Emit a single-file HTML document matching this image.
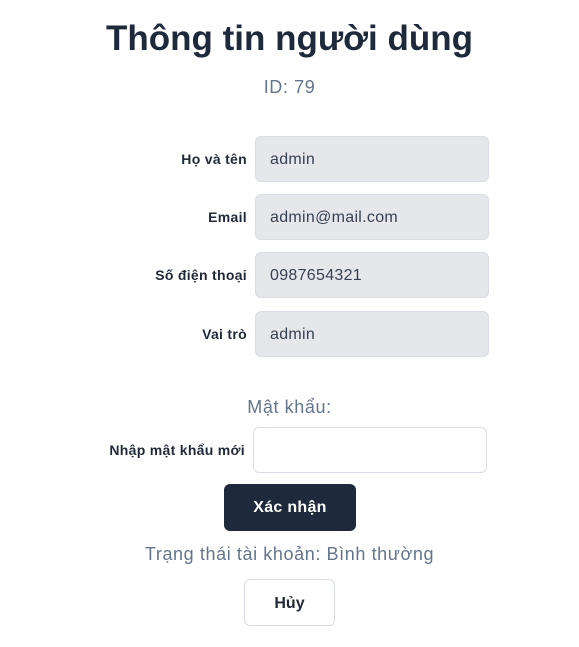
<!DOCTYPE html>
<html><head><meta charset="utf-8"><style>
*{box-sizing:border-box;margin:0;padding:0}
body{width:579px;height:647px;background:#fff;font-family:"Liberation Sans","DejaVu Sans",sans-serif;position:relative;overflow:hidden}
.a{position:absolute}
.t{left:0;width:579px;text-align:center}
h1{font-size:35px;font-weight:bold;color:#1e293b;top:19px}
.sub{font-size:18px;color:#64748b;letter-spacing:0.6px}
.lbl{right:332px;font-size:14px;font-weight:bold;color:#1f2937;text-align:right;white-space:nowrap;letter-spacing:0.3px}
.in{left:255px;width:234px;height:46px;background:#e5e7eb;border:1px solid #d9dde3;border-radius:6px;font-size:16px;color:#374151;padding-left:14px;line-height:46px;letter-spacing:0.3px}
.btn{border-radius:6px;text-align:center;font-weight:bold;font-size:16px}
</style></head><body>
<h1 class="a t">Thông tin người dùng</h1>
<div class="a t sub" style="top:77px">ID: 79</div>

<div class="a lbl" style="top:151px">Họ và tên</div>
<div class="a in" style="top:136px">admin</div>
<div class="a lbl" style="top:209px">Email</div>
<div class="a in" style="top:194px">admin@mail.com</div>
<div class="a lbl" style="top:267px">Số điện thoại</div>
<div class="a in" style="top:252px">0987654321</div>
<div class="a lbl" style="top:326px">Vai trò</div>
<div class="a in" style="top:311px">admin</div>

<div class="a t sub" style="top:397px">Mật khẩu:</div>
<div class="a lbl" style="top:442px;right:334px">Nhập mật khẩu mới</div>
<div class="a in" style="top:427px;left:253px;width:234px;background:#fff;border-color:#d9dde3"></div>

<div class="a btn" style="left:224px;top:484px;width:132px;height:47px;background:#1e293b;color:#fff;line-height:47px;letter-spacing:0.3px">Xác nhận</div>
<div class="a t sub" style="top:544px">Trạng thái tài khoản: Bình thường</div>
<div class="a btn" style="left:244px;top:579px;width:91px;height:47px;background:#fff;border:1px solid #d9dde3;color:#1f2937;line-height:47px">Hủy</div>
</body></html>
